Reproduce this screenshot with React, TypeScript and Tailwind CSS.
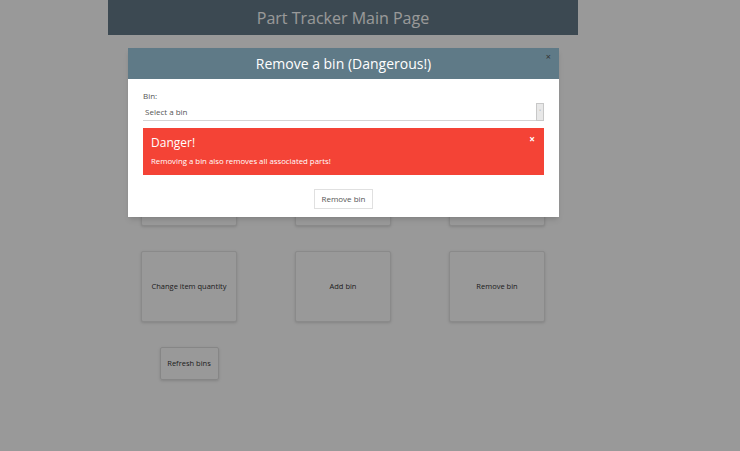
import React from 'react';

const font = { fontFamily: '"Open Sans", "Noto Sans", sans-serif' };

const Card: React.FC<{ label: string }> = ({ label }) => (
  <div className="flex justify-center">
    <div className="w-[96px] h-[71px] flex items-center justify-center border border-[#e6e6e6] rounded-[2px] shadow-[0_1px_3px_rgba(0,0,0,0.15)] text-[7.5px] text-[#333] bg-white">
      {label}
    </div>
  </div>
);

export default function App() {
  return (
    <div className="relative w-[740px] h-[451px] bg-white overflow-hidden" style={font}>
      {/* Page under the modal */}
      <div className="ml-[108px] w-[470px]">
        <div className="h-[35px] bg-[#647b89] flex items-center justify-center text-white text-[16px]">
          Part Tracker Main Page
        </div>
        <div className="px-[4px] pt-[120px] grid grid-cols-3 gap-y-[25px]">
          <Card label="Add part" />
          <Card label="Find part" />
          <Card label="Move part" />
          <Card label="Change item quantity" />
          <Card label="Add bin" />
          <Card label="Remove bin" />
          <div className="flex justify-center">
            <div className="w-[59px] h-[33px] flex items-center justify-center border border-[#e0e0e0] rounded-[2px] shadow-[0_1px_3px_rgba(0,0,0,0.15)] text-[7.5px] text-[#333]">
              Refresh bins
            </div>
          </div>
        </div>
      </div>

      {/* Overlay */}
      <div className="absolute inset-0 bg-black/40" />

      {/* Modal */}
      <div className="absolute left-[128px] top-[48px] w-[431px] bg-white shadow-md">
        <div className="relative h-[31px] bg-[#5f7a87] flex items-center justify-center text-white text-[14px]">
          Remove a bin (Dangerous!)
          <span className="absolute right-[8px] top-[4px] text-[9px] text-[#333] leading-none">×</span>
        </div>
        <div className="px-[15px] pt-[13px] pb-[8px]">
          <div className="text-[8px] text-[#555] leading-none">Bin:</div>
          <div className="mt-[3px] h-[18px] flex items-center border-b border-[#d4d4d4]">
            <span className="flex-1 pl-[2px] text-[8px] text-[#555]">Select a bin</span>
            <div className="w-[8px] h-[18px] bg-[#e8e8e8] border border-[#c8c8c8] flex items-center justify-center text-[6px] text-[#777] leading-none">
              ˅
            </div>
          </div>
          <div className="relative mt-[7px] h-[47px] bg-[#f44336] px-[8px] pt-[7px] text-white">
            <div className="text-[12px] leading-[16px]">Danger!</div>
            <div className="mt-[5px] text-[7.8px] leading-[10px]">Removing a bin also removes all associated parts!</div>
            <span className="absolute right-[9px] top-[6px] text-[10px] font-bold leading-none">×</span>
          </div>
          <div className="mt-[14px] flex justify-center">
            <div className="w-[59px] h-[20px] flex items-center justify-center border border-[#e0e0e0] text-[8px] text-[#555]">
              Remove bin
            </div>
          </div>
        </div>
      </div>
    </div>
  );
}
